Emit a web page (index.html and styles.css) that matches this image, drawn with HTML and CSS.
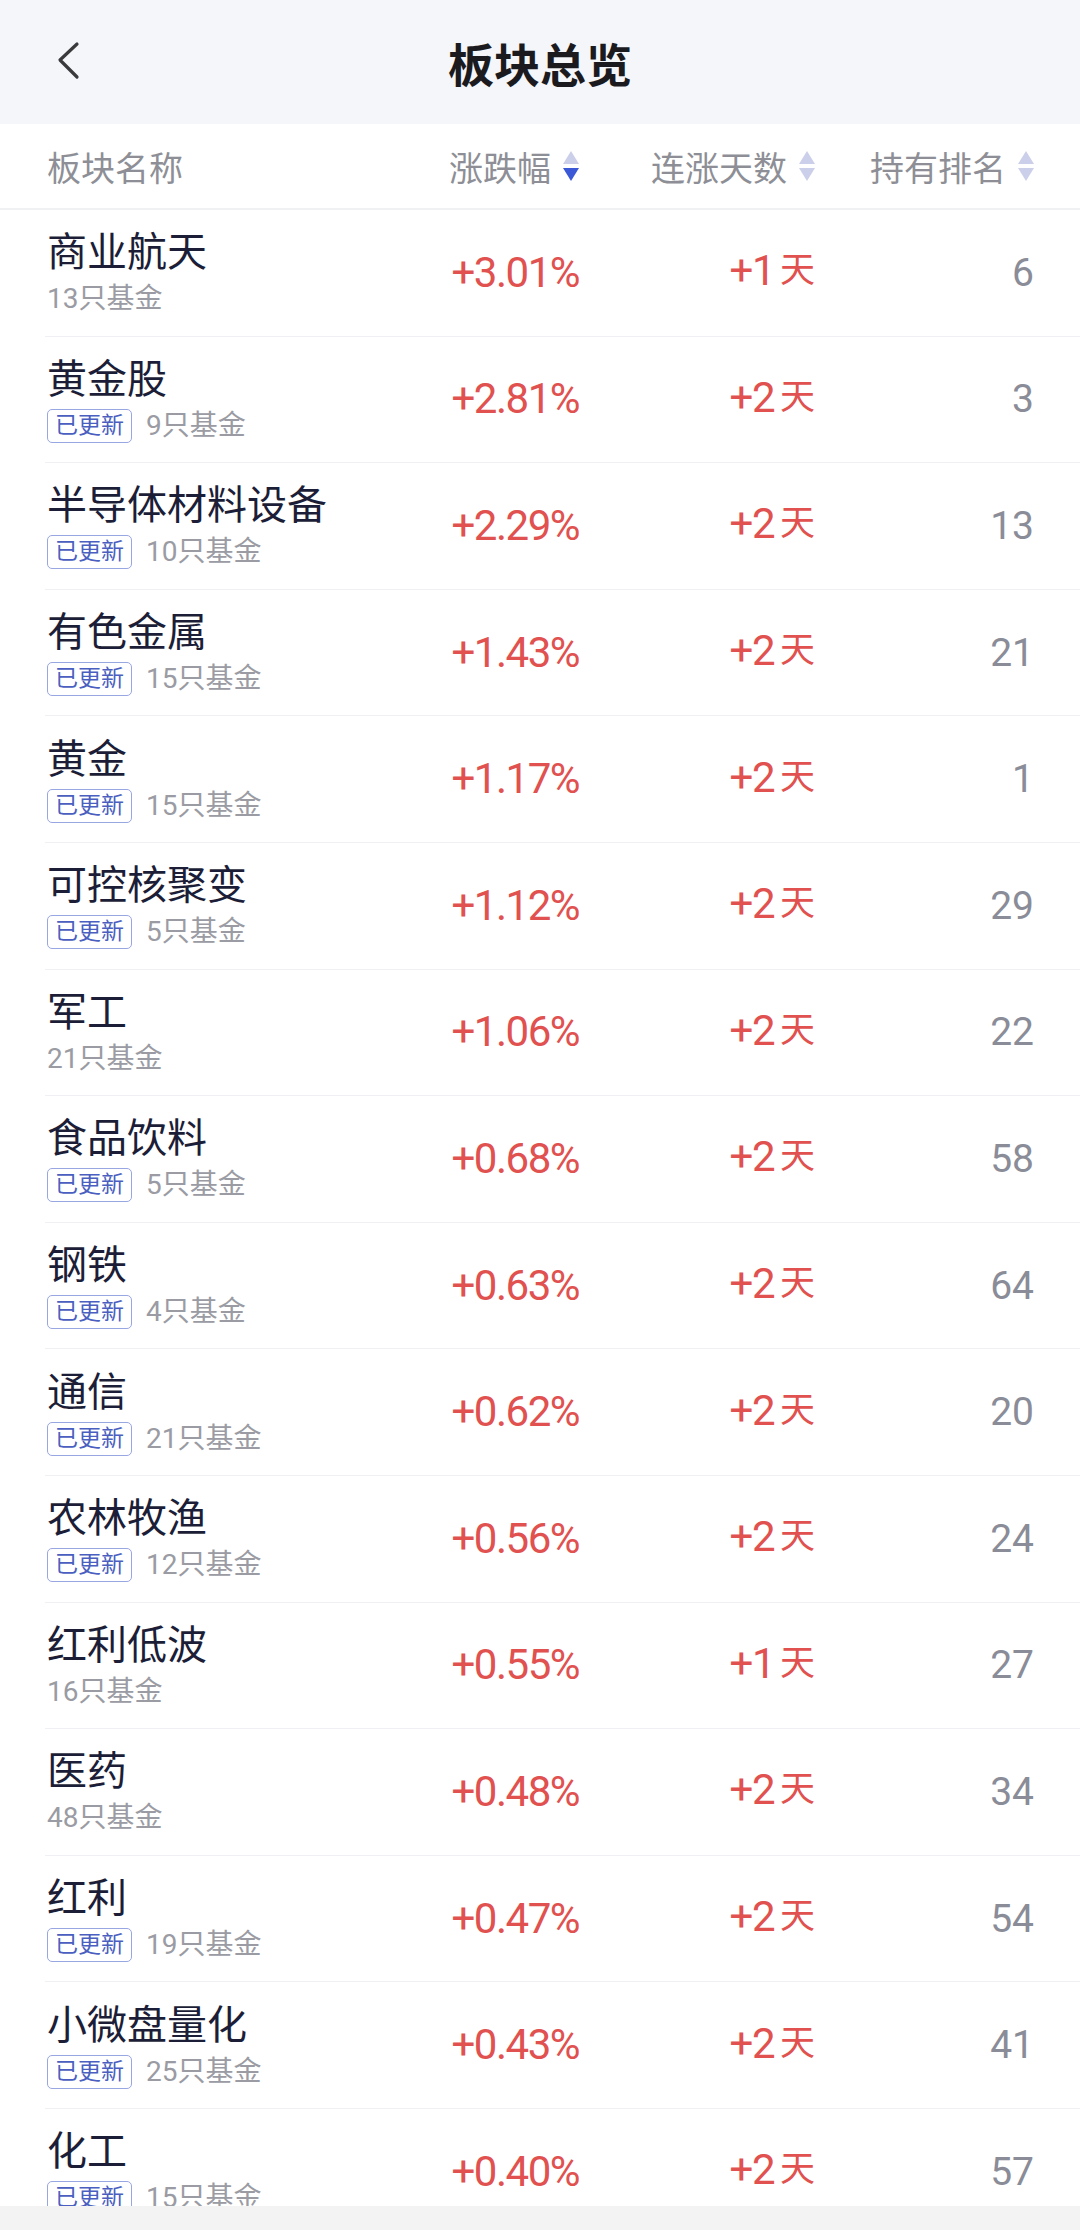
FILE: index.html
```html
<!DOCTYPE html>
<html lang="zh-CN">
<head>
  <meta charset="UTF-8">
  <meta name="viewport" content="width=device-width, initial-scale=1.0">
  <title>板块总览</title>
  <link rel="stylesheet" href="styles.css">
</head>
<body>
  <div class="topbar">
    <svg class="back" width="24" height="40" viewBox="0 0 24 40">
      <polyline points="20,3 3,19 20,36" fill="none" stroke="#3a3a3c" stroke-width="3.2" stroke-linecap="round" stroke-linejoin="round"/>
    </svg>
    <div class="title">板块总览</div>
  </div>

  <div class="table-head">
    <div class="th th-name">板块名称</div>
    <div class="th">涨跌幅
      <svg class="sort" width="16" height="30" viewBox="0 0 16 30">
        <path d="M8 0 L16 13 L0 13 Z" fill="#cbcfe9"/>
        <path d="M0 17 L16 17 L8 30 Z" fill="#3b58d6"/>
      </svg>
    </div>
    <div class="th">连涨天数
      <svg class="sort" width="16" height="30" viewBox="0 0 16 30">
        <path d="M8 0 L16 13 L0 13 Z" fill="#cbcfe9"/>
        <path d="M0 17 L16 17 L8 30 Z" fill="#cbcfe9"/>
      </svg>
    </div>
    <div class="th">持有排名
      <svg class="sort" width="16" height="30" viewBox="0 0 16 30">
        <path d="M8 0 L16 13 L0 13 Z" fill="#cbcfe9"/>
        <path d="M0 17 L16 17 L8 30 Z" fill="#cbcfe9"/>
      </svg>
    </div>
  </div>

  <div class="list">
    <div class="row">
      <div class="name-cell"><div class="name">商业航天</div><div class="sub"><span class="count">13只基金</span></div></div>
      <div class="pct">+3.01%</div><div class="days">+1<span class="unit">天</span></div><div class="rank">6</div>
    </div>
    <div class="row">
      <div class="name-cell"><div class="name">黄金股</div><div class="sub"><span class="badge">已更新</span><span class="count">9只基金</span></div></div>
      <div class="pct">+2.81%</div><div class="days">+2<span class="unit">天</span></div><div class="rank">3</div>
    </div>
    <div class="row">
      <div class="name-cell"><div class="name">半导体材料设备</div><div class="sub"><span class="badge">已更新</span><span class="count">10只基金</span></div></div>
      <div class="pct">+2.29%</div><div class="days">+2<span class="unit">天</span></div><div class="rank">13</div>
    </div>
    <div class="row">
      <div class="name-cell"><div class="name">有色金属</div><div class="sub"><span class="badge">已更新</span><span class="count">15只基金</span></div></div>
      <div class="pct">+1.43%</div><div class="days">+2<span class="unit">天</span></div><div class="rank">21</div>
    </div>
    <div class="row">
      <div class="name-cell"><div class="name">黄金</div><div class="sub"><span class="badge">已更新</span><span class="count">15只基金</span></div></div>
      <div class="pct">+1.17%</div><div class="days">+2<span class="unit">天</span></div><div class="rank">1</div>
    </div>
    <div class="row">
      <div class="name-cell"><div class="name">可控核聚变</div><div class="sub"><span class="badge">已更新</span><span class="count">5只基金</span></div></div>
      <div class="pct">+1.12%</div><div class="days">+2<span class="unit">天</span></div><div class="rank">29</div>
    </div>
    <div class="row">
      <div class="name-cell"><div class="name">军工</div><div class="sub"><span class="count">21只基金</span></div></div>
      <div class="pct">+1.06%</div><div class="days">+2<span class="unit">天</span></div><div class="rank">22</div>
    </div>
    <div class="row">
      <div class="name-cell"><div class="name">食品饮料</div><div class="sub"><span class="badge">已更新</span><span class="count">5只基金</span></div></div>
      <div class="pct">+0.68%</div><div class="days">+2<span class="unit">天</span></div><div class="rank">58</div>
    </div>
    <div class="row">
      <div class="name-cell"><div class="name">钢铁</div><div class="sub"><span class="badge">已更新</span><span class="count">4只基金</span></div></div>
      <div class="pct">+0.63%</div><div class="days">+2<span class="unit">天</span></div><div class="rank">64</div>
    </div>
    <div class="row">
      <div class="name-cell"><div class="name">通信</div><div class="sub"><span class="badge">已更新</span><span class="count">21只基金</span></div></div>
      <div class="pct">+0.62%</div><div class="days">+2<span class="unit">天</span></div><div class="rank">20</div>
    </div>
    <div class="row">
      <div class="name-cell"><div class="name">农林牧渔</div><div class="sub"><span class="badge">已更新</span><span class="count">12只基金</span></div></div>
      <div class="pct">+0.56%</div><div class="days">+2<span class="unit">天</span></div><div class="rank">24</div>
    </div>
    <div class="row">
      <div class="name-cell"><div class="name">红利低波</div><div class="sub"><span class="count">16只基金</span></div></div>
      <div class="pct">+0.55%</div><div class="days">+1<span class="unit">天</span></div><div class="rank">27</div>
    </div>
    <div class="row">
      <div class="name-cell"><div class="name">医药</div><div class="sub"><span class="count">48只基金</span></div></div>
      <div class="pct">+0.48%</div><div class="days">+2<span class="unit">天</span></div><div class="rank">34</div>
    </div>
    <div class="row">
      <div class="name-cell"><div class="name">红利</div><div class="sub"><span class="badge">已更新</span><span class="count">19只基金</span></div></div>
      <div class="pct">+0.47%</div><div class="days">+2<span class="unit">天</span></div><div class="rank">54</div>
    </div>
    <div class="row">
      <div class="name-cell"><div class="name">小微盘量化</div><div class="sub"><span class="badge">已更新</span><span class="count">25只基金</span></div></div>
      <div class="pct">+0.43%</div><div class="days">+2<span class="unit">天</span></div><div class="rank">41</div>
    </div>
    <div class="row">
      <div class="name-cell"><div class="name">化工</div><div class="sub"><span class="badge">已更新</span><span class="count">15只基金</span></div></div>
      <div class="pct">+0.40%</div><div class="days">+2<span class="unit">天</span></div><div class="rank">57</div>
    </div>
  </div>

  <div class="bottom-bar"></div>
</body>
</html>
```

FILE: styles.css
```css
body {
  margin: 0;
  font-family: Roboto, "Noto Sans CJK SC", sans-serif;
  background-color: #ffffff;
  height: 2230px;
  overflow: hidden;
}
.topbar {
  height: 124px;
  background-color: #f5f6f9;
  display: flex;
  align-items: center;
  justify-content: center;
  position: relative;
}
.back {
  position: absolute;
  left: 57px;
  top: 41px;
}
.title {
  font-family: "Noto Sans CJK SC", sans-serif;
  font-size: 46px;
  font-weight: 700;
  color: #1b1b1f;
}
.table-head {
  height: 84px;
  border-bottom: 2px solid #f0f1f3;
  display: grid;
  grid-template-columns: 332px 200px 236px 219px;
  padding: 0 46px 0 47px;
  align-items: center;
}
.th {
  font-family: "Noto Sans CJK SC", sans-serif;
  font-size: 34px;
  color: #8e8f96;
  display: flex;
  align-items: center;
  justify-content: flex-end;
  gap: 12px;
}
.th-name {
  justify-content: flex-start;
}
.list {
  padding-left: 45px;
}
.row {
  height: 126.6px;
  box-sizing: border-box;
  border-bottom: 1px solid #eff0f3;
  display: grid;
  grid-template-columns: 332px 200px 236px 219px;
  padding: 0 46px 0 2px;
  align-items: center;
}
.name-cell {
  display: flex;
  flex-direction: column;
  gap: 5px;
}
.name {
  font-size: 40px;
  line-height: 48px;
  color: #1c1e38;
  white-space: nowrap;
}
.sub {
  height: 34px;
  display: flex;
  align-items: center;
  gap: 14px;
}
.badge {
  height: 34px;
  box-sizing: border-box;
  padding: 0 7px;
  border: 1.5px solid #98a6e2;
  border-radius: 5px;
  color: #4a5fbf;
  font-size: 23px;
  line-height: 31px;
}
.count {
  font-size: 28px;
  line-height: 34px;
  color: #9a9ba3;
}
.pct, .days {
  text-align: right;
  font-size: 42px;
  line-height: 50px;
  letter-spacing: -1.5px;
  color: #e0514f;
}
.unit {
  font-size: 35px;
  letter-spacing: 0;
  margin-left: 6px;
  position: relative;
  top: -3px;
}
.rank {
  text-align: right;
  font-size: 39px;
  color: #8a8c98;
}
.bottom-bar {
  position: fixed;
  left: 0;
  right: 0;
  bottom: 0;
  height: 24px;
  background-color: #f3f3f4;
}
```
